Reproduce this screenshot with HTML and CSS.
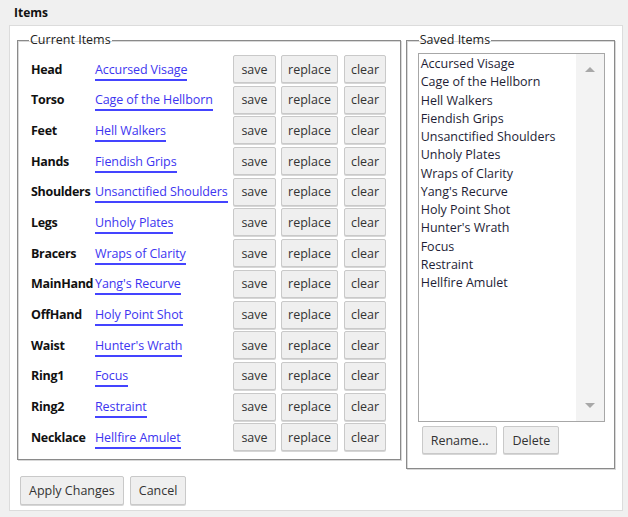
FILE: index.html
```html
<!DOCTYPE html>
<html>
<head>
<meta charset="utf-8">
<link rel="stylesheet" href="styles.css">
</head>
<body>
<div class="window">
  <div class="titlebar">Items</div>
  <div class="content">
    <div class="panels">
      <fieldset class="current">
        <legend>Current Items</legend>
        <div class="rows">
          <div class="row"><span class="slot">Head</span><span class="cell"><a class="item">Accursed Visage</a></span><button class="btn save">save</button><button class="btn replace">replace</button><button class="btn clear">clear</button></div>
          <div class="row"><span class="slot">Torso</span><span class="cell"><a class="item">Cage of the Hellborn</a></span><button class="btn save">save</button><button class="btn replace">replace</button><button class="btn clear">clear</button></div>
          <div class="row"><span class="slot">Feet</span><span class="cell"><a class="item">Hell Walkers</a></span><button class="btn save">save</button><button class="btn replace">replace</button><button class="btn clear">clear</button></div>
          <div class="row"><span class="slot">Hands</span><span class="cell"><a class="item">Fiendish Grips</a></span><button class="btn save">save</button><button class="btn replace">replace</button><button class="btn clear">clear</button></div>
          <div class="row"><span class="slot">Shoulders</span><span class="cell"><a class="item">Unsanctified Shoulders</a></span><button class="btn save">save</button><button class="btn replace">replace</button><button class="btn clear">clear</button></div>
          <div class="row"><span class="slot">Legs</span><span class="cell"><a class="item">Unholy Plates</a></span><button class="btn save">save</button><button class="btn replace">replace</button><button class="btn clear">clear</button></div>
          <div class="row"><span class="slot">Bracers</span><span class="cell"><a class="item">Wraps of Clarity</a></span><button class="btn save">save</button><button class="btn replace">replace</button><button class="btn clear">clear</button></div>
          <div class="row"><span class="slot">MainHand</span><span class="cell"><a class="item">Yang's Recurve</a></span><button class="btn save">save</button><button class="btn replace">replace</button><button class="btn clear">clear</button></div>
          <div class="row"><span class="slot">OffHand</span><span class="cell"><a class="item">Holy Point Shot</a></span><button class="btn save">save</button><button class="btn replace">replace</button><button class="btn clear">clear</button></div>
          <div class="row"><span class="slot">Waist</span><span class="cell"><a class="item">Hunter's Wrath</a></span><button class="btn save">save</button><button class="btn replace">replace</button><button class="btn clear">clear</button></div>
          <div class="row"><span class="slot">Ring1</span><span class="cell"><a class="item">Focus</a></span><button class="btn save">save</button><button class="btn replace">replace</button><button class="btn clear">clear</button></div>
          <div class="row"><span class="slot">Ring2</span><span class="cell"><a class="item">Restraint</a></span><button class="btn save">save</button><button class="btn replace">replace</button><button class="btn clear">clear</button></div>
          <div class="row"><span class="slot">Necklace</span><span class="cell"><a class="item">Hellfire Amulet</a></span><button class="btn save">save</button><button class="btn replace">replace</button><button class="btn clear">clear</button></div>
        </div>
      </fieldset>
      <fieldset class="saved">
        <legend>Saved Items</legend>
        <div class="listbox">
          <ul class="options">
            <li>Accursed Visage</li>
            <li>Cage of the Hellborn</li>
            <li>Hell Walkers</li>
            <li>Fiendish Grips</li>
            <li>Unsanctified Shoulders</li>
            <li>Unholy Plates</li>
            <li>Wraps of Clarity</li>
            <li>Yang's Recurve</li>
            <li>Holy Point Shot</li>
            <li>Hunter's Wrath</li>
            <li>Focus</li>
            <li>Restraint</li>
            <li>Hellfire Amulet</li>
          </ul>
          <div class="scrollbar">
            <span class="arrow up"></span>
            <span class="arrow down"></span>
          </div>
        </div>
        <div class="saved-actions">
          <button class="btn">Rename...</button>
          <button class="btn">Delete</button>
        </div>
      </fieldset>
    </div>
    <div class="actions">
      <button class="btn big">Apply Changes</button>
      <button class="btn big">Cancel</button>
    </div>
  </div>
</div>
</body>
</html>
```

FILE: styles.css
```css
* { box-sizing: border-box; }
html, body {
  margin: 0;
  padding: 0;
  background: #f0f0f0;
  font-family: "Open Sans", "Noto Sans", sans-serif;
  font-size: 12.5px;
  color: #111;
}
.window {
  width: 628px;
  height: 517px;
  display: flex;
  flex-direction: column;
}
.titlebar {
  height: 25px;
  padding: 4px 0 0 14px;
  font-weight: bold;
  font-size: 12px;
  color: #111;
}
.content {
  margin-left: 9px;
  width: 614px;
  height: 486px;
  background: #fff;
  border: 1px solid #dcdcdc;
  padding: 6px 7px 0 7px;
}
.panels {
  display: flex;
  align-items: flex-start;
  gap: 5px;
}
fieldset {
  margin: 0;
  border: 1px solid #8a8a8a;
  box-shadow: inset 1px 1px 0 #d8d8d8, 1px 1px 0 #d8d8d8;
}
legend {
  padding: 0 1px;
  color: #222;
  line-height: 16px;
}
.current {
  width: 385px;
  padding: 7px 4px 8px 13px;
}
.current legend { margin-left: -2px; }
.saved {
  width: 210px;
  padding: 5px 9px 14px 11px;
}
.saved legend { margin-left: 1px; }
.rows {
  display: flex;
  flex-direction: column;
  gap: 2.7px;
}
.row {
  display: flex;
  align-items: center;
  height: 28px;
}
.slot {
  width: 64px;
  font-weight: bold;
  white-space: nowrap;
  letter-spacing: -0.3px;
}
.cell {
  width: 138px;
  white-space: nowrap;
}
.item {
  color: #3d35f0;
  border-bottom: 2px solid #4444ff;
  padding-bottom: 1px;
  letter-spacing: -0.1px;
  cursor: pointer;
}
.btn {
  font-family: inherit;
  font-size: 12.5px;
  color: #333;
  background: #efefef;
  border: 1px solid #c9c9c9;
  border-radius: 2px;
  box-shadow: 0 1px 0 #d6d6d6;
  height: 28px;
  padding: 0 8px;
  margin-right: 6px;
}
.btn.save { width: 43px; padding: 0; margin-right: 5px; }
.btn.replace { width: 57px; padding: 0; margin-right: 6px; }
.btn.clear { width: 42px; padding: 0; }
.listbox {
  height: 369px;
  border: 1px solid #a7a7a7;
  display: flex;
}
.options {
  list-style: none;
  margin: 0;
  padding: 1px 0 0 2px;
  flex: 1;
  color: #1e1e36;
}
.options li {
  height: 18.25px;
  line-height: 18px;
  white-space: nowrap;
}
.scrollbar {
  width: 28px;
  background: #f3f3f3;
  display: flex;
  flex-direction: column;
  justify-content: space-between;
  align-items: center;
  padding: 13px 0 13px;
}
.arrow {
  width: 0;
  height: 0;
  border-left: 5px solid transparent;
  border-right: 5px solid transparent;
}
.arrow.up { border-bottom: 5px solid #a8a8a8; }
.arrow.down { border-top: 5px solid #a8a8a8; }
.saved-actions {
  display: flex;
  padding: 4px 0 0 4px;
}
.actions {
  display: flex;
  padding: 7px 0 0 3px;
}
.btn.big { height: 29px; }
```
